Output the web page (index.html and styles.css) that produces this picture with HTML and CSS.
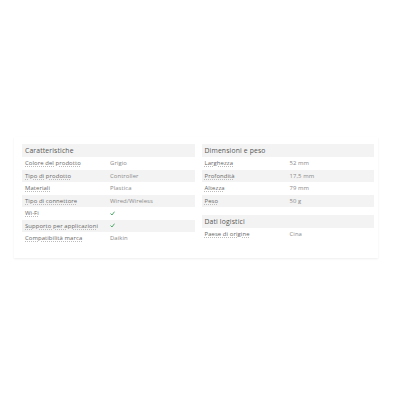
FILE: index.html
```html
<!DOCTYPE html>
<html lang="it">
<head>
<meta charset="utf-8">
<link rel="stylesheet" href="styles.css">
</head>
<body>
<div class="panel">
  <div class="col">
    <div class="group">
      <div class="head">Caratteristiche</div>
      <div class="row"><span class="k">Colore del prodotto</span><span class="v">Grigio</span></div>
      <div class="row"><span class="k">Tipo di prodotto</span><span class="v">Controller</span></div>
      <div class="row"><span class="k">Materiali</span><span class="v">Plastica</span></div>
      <div class="row"><span class="k">Tipo di connettore</span><span class="v">Wired/Wireless</span></div>
      <div class="row"><span class="k">Wi-Fi</span><span class="v"><svg class="chk" viewBox="0 0 10 10"><path d="M1.5 5.5 L4 8 L8.5 2" fill="none" stroke="#3aa35a" stroke-width="1.8" stroke-linecap="round" stroke-linejoin="round"/></svg></span></div>
      <div class="row"><span class="k">Supporto per applicazioni</span><span class="v"><svg class="chk" viewBox="0 0 10 10"><path d="M1.5 5.5 L4 8 L8.5 2" fill="none" stroke="#3aa35a" stroke-width="1.8" stroke-linecap="round" stroke-linejoin="round"/></svg></span></div>
      <div class="row"><span class="k">Compatibilità marca</span><span class="v">Daikin</span></div>
    </div>
  </div>
  <div class="col">
    <div class="group">
      <div class="head">Dimensioni e peso</div>
      <div class="row"><span class="k">Larghezza</span><span class="v">52 mm</span></div>
      <div class="row"><span class="k">Profondità</span><span class="v">17,5 mm</span></div>
      <div class="row"><span class="k">Altezza</span><span class="v">79 mm</span></div>
      <div class="row"><span class="k">Peso</span><span class="v">50 g</span></div>
    </div>
    <div class="group">
      <div class="head">Dati logistici</div>
      <div class="row"><span class="k">Paese di origine</span><span class="v">Cina</span></div>
    </div>
  </div>
</div>
</body>
</html>
```
FILE: styles.css
```css
html, body {
  margin: 0;
  padding: 0;
  background: #fff;
}
body {
  width: 400px;
  height: 400px;
  font-family: "Open Sans", "DejaVu Sans", sans-serif;
  color: #666;
}
.panel {
  margin: 137px 22px 0 14px;
  height: 121px;
  box-sizing: border-box;
  padding: 7px 4px 0 8px;
  display: flex;
  gap: 7px;
  box-shadow: 0 1px 2px rgba(0,0,0,0.07);
}
.col {
  flex: 1;
  display: flex;
  flex-direction: column;
  gap: 8px;
}
.group {
  display: flex;
  flex-direction: column;
}
.head {
  background: #f3f3f3;
  height: 13px;
  line-height: 13px;
  padding-left: 3px;
  font-size: 6.8px;
  color: #555;
  letter-spacing: 0.15px;
}
.row {
  display: flex;
  height: 12.5px;
  line-height: 12.5px;
  font-size: 5.9px;
  padding-left: 3px;
  letter-spacing: 0.1px;
}
.row:nth-child(odd) {
  background: #f3f3f3;
}
.k {
  width: 85px;
  flex: none;
  color: #666;
  text-decoration: underline dotted #bbb;
  text-underline-offset: 1px;
}
.v {
  color: #8a8a8a;
  display: flex;
  align-items: center;
}
.chk {
  width: 5px;
  height: 5px;
}
```
